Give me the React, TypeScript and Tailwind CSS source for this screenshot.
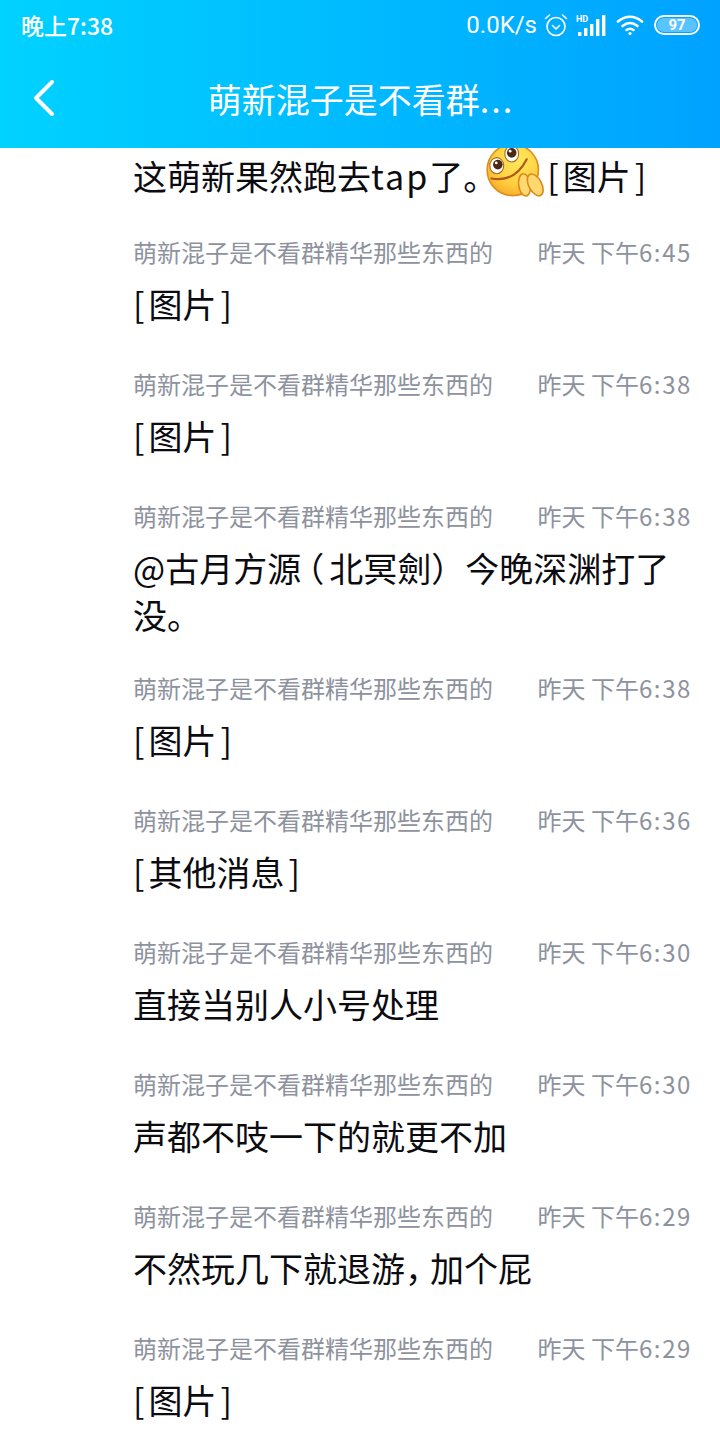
const FONT = "font-['Noto_Sans_CJK_SC','Noto_Sans',sans-serif]";

function Bracketed({ label }: { label: string }) {
  return (
    <>
      <span className="mr-[4px]">[</span>
      {label}
      <span className="ml-[4px]">]</span>
    </>
  );
}

const rows = [
  { time: "6:45", text: <Bracketed label="图片" /> },
  { time: "6:38", text: <Bracketed label="图片" /> },
  {
    time: "6:38",
    tight: true,
    text: (
      <>
        @古月方源<span className="ml-[6px] mr-[5px] [font-feature-settings:'halt']">（</span>北冥劍）今晚深渊打了
        <br />
        没。
      </>
    ),
  },
  { time: "6:38", text: <Bracketed label="图片" /> },
  { time: "6:36", text: <Bracketed label="其他消息" /> },
  { time: "6:30", text: "直接当别人小号处理" },
  { time: "6:30", text: "声都不吱一下的就更不加" },
  {
    time: "6:29",
    text: (
      <>
        不然玩几下就退游<span className="tracking-[-9px]">，</span>加个屁
      </>
    ),
  },
  { time: "6:29", text: <Bracketed label="图片" /> },
];

function Emoji() {
  return (
    <svg viewBox="0 0 58 52" className="w-[62px] h-[56px] shrink-0 -mt-[8px] -ml-[1px]">
      <defs>
        <radialGradient id="face" cx="60%" cy="30%" r="75%">
          <stop offset="0%" stopColor="#ffe95e" />
          <stop offset="65%" stopColor="#ffcf3e" />
          <stop offset="100%" stopColor="#f7a92a" />
        </radialGradient>
      </defs>
      <circle cx="26" cy="25" r="24" fill="url(#face)" stroke="#dc8f1e" strokeWidth="1.5" />
      <ellipse cx="11" cy="21" rx="6.5" ry="7.5" fill="#fff" stroke="#a8651a" strokeWidth="1" />
      <circle cx="12" cy="20" r="4.5" fill="#4a2a14" />
      <circle cx="10.5" cy="18.5" r="1.3" fill="#fff" />
      <ellipse cx="25" cy="10" rx="6.5" ry="7.5" fill="#fff" stroke="#a8651a" strokeWidth="1" />
      <circle cx="25" cy="9" r="4.5" fill="#4a2a14" />
      <circle cx="23.5" cy="7.5" r="1.3" fill="#fff" />
      <path d="M6 33 Q28 37 39 15" fill="none" stroke="#b5561a" strokeWidth="2" strokeLinecap="round" />
      <ellipse cx="37" cy="39" rx="5.5" ry="10.5" fill="#ffd970" stroke="#d98a1c" strokeWidth="1.5" transform="rotate(-8 37 39)" />
      <ellipse cx="47" cy="39" rx="6" ry="11" fill="#ffd970" stroke="#d98a1c" strokeWidth="1.5" transform="rotate(-28 47 39)" />
    </svg>
  );
}

function StatusIcons() {
  return (
    <div className="flex items-center gap-[7px] text-white">
      <svg viewBox="0 0 26 26" className="w-[26px] h-[26px]" fill="none" stroke="currentColor" strokeWidth="1.6" strokeLinecap="round" strokeLinejoin="round">
        <circle cx="13" cy="14.5" r="9" />
        <path d="M9.5 13.5 L13 17 L16.5 13.5" />
        <path d="M2.5 6.5 L6.5 3 M23.5 6.5 L19.5 3" />
      </svg>
      <svg viewBox="0 0 30 24" className="w-[30px] h-[24px]" fill="currentColor">
        <text x="0" y="8.5" fontSize="9" fontWeight="700" fontFamily="Roboto, sans-serif">HD</text>
        <rect x="2" y="19" width="3.4" height="4" />
        <rect x="8" y="15" width="3.4" height="8" />
        <rect x="14" y="11" width="3.4" height="12" />
        <rect x="20" y="6" width="3.4" height="17" />
        <rect x="26" y="2" width="3.4" height="21" />
      </svg>
      <svg viewBox="0 0 28 22" className="w-[28px] h-[22px] ml-[3px]" fill="none" stroke="currentColor" strokeWidth="2.6" strokeLinecap="round">
        <path d="M2 7.5 Q14 -2 26 7.5" />
        <path d="M6.5 12 Q14 6 21.5 12" />
        <path d="M10.5 16 Q14 13.5 17.5 16" />
        <circle cx="14" cy="19.5" r="1.6" fill="currentColor" stroke="none" />
      </svg>
      <div className="ml-[3px] w-[46px] h-[20px] rounded-full border-2 border-white flex items-center overflow-hidden p-[1px]">
        <div className="w-full h-full rounded-full bg-white/35 flex items-center justify-center text-[15px] leading-none font-bold font-['Roboto',sans-serif]">
          97
        </div>
      </div>
    </div>
  );
}

function Row({ time, text, tight }: { time: string; text: React.ReactNode; tight?: boolean }) {
  return (
    <div className={`pl-[133px] pr-[30px] ${tight ? "pb-[33px]" : "pb-[40px]"}`}>
      <div className="flex justify-between items-center h-[34px] text-[24px] leading-[34px] text-[#8d929e] whitespace-nowrap">
        <span>萌新混子是不看群精华那些东西的</span>
        <span>
          昨天 下午<span className="tracking-[1.6px] -mr-[2px]">{time}</span>
        </span>
      </div>
      <div className="mt-[11px] text-[34px] leading-[47px] text-[#0b0b10] break-all">{text}</div>
    </div>
  );
}

export default function App() {
  return (
    <div className={`w-[720px] h-[1440px] overflow-hidden bg-white ${FONT}`}>
      <header className="h-[148px] bg-gradient-to-r from-[#00d2ff] to-[#00a2ff] text-white">
        <div className="h-[50px] flex items-center justify-between pl-[21px] pr-[20px]">
          <span className="text-[23px] font-medium">晚上7:38</span>
          <div className="flex items-center gap-[6px]">
            <span className="text-[24px] font-['Roboto',sans-serif]">0.0K/s</span>
            <StatusIcons />
          </div>
        </div>
        <div className="h-[98px] relative flex items-center justify-center">
          <svg viewBox="0 0 24 40" className="absolute left-[32px] top-[28px] w-[24px] h-[40px]" fill="none" stroke="currentColor" strokeWidth="4" strokeLinecap="round" strokeLinejoin="round">
            <path d="M20 4 L4 20 L20 36" />
          </svg>
          <span className="text-[34px] leading-none pl-[2px]">
            萌新混子是不看群<span className="tracking-[2px]">...</span>
          </span>
        </div>
      </header>

      <div className="h-[54px] pl-[133px] flex items-center text-[34px] text-[#0b0b10] overflow-hidden whitespace-pre">
        <span>这萌新果然跑去</span>
        <span className="tracking-[2px]">tap</span>
        <span>了</span>
        <span className="tracking-[-11px]">。</span>
        <Emoji />
        <span>
          <Bracketed label="图片" />
        </span>
      </div>

      <div className="pt-[33px]">
        {rows.map((r, i) => (
          <Row key={i} time={r.time} text={r.text} tight={r.tight} />
        ))}
      </div>
    </div>
  );
}
